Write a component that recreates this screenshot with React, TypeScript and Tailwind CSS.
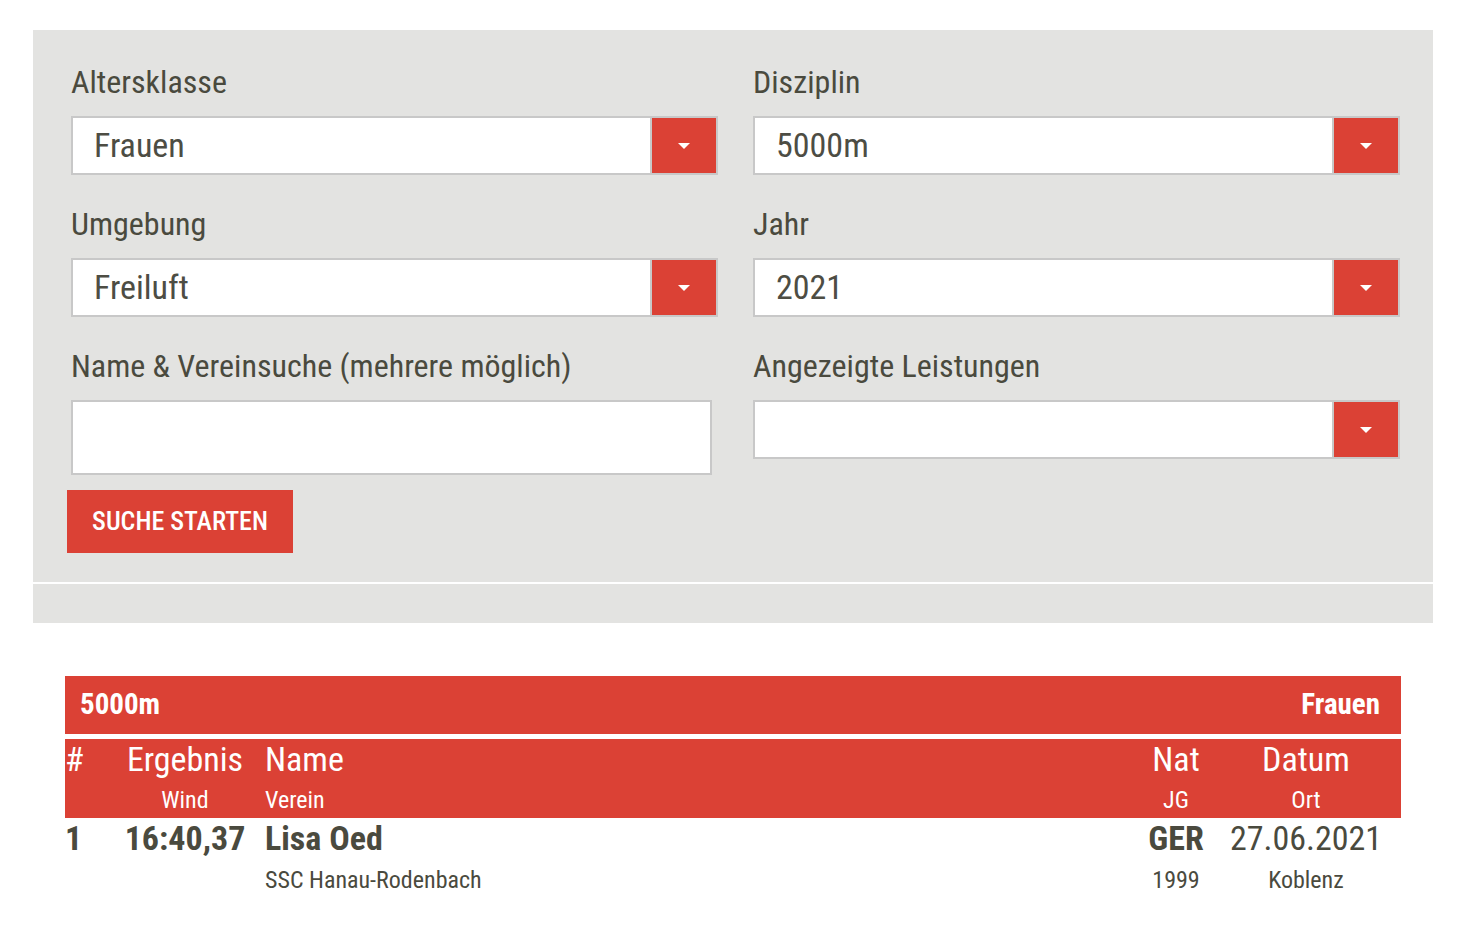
import React from "react";

const FONT = { fontFamily: "Roboto, 'Liberation Sans', sans-serif", fontStretch: "condensed" } as React.CSSProperties;

function Caret() {
  return (
    <svg width="14" height="8" viewBox="0 0 14 8">
      <polygon points="1,1 13,1 7,7" fill="#fff" />
    </svg>
  );
}

function Select({ value }: { value: string }) {
  return (
    <div className="flex h-[59px] border-2 border-[#c8c8c8] bg-white">
      <div className="flex flex-1 items-center pl-[21px] text-[34px] text-[#4d4d44]">{value}</div>
      <div className="flex w-[66px] items-center justify-center border-l-2 border-[#c8c8c8] bg-[#db4135]">
        <Caret />
      </div>
    </div>
  );
}

function Label({ children }: { children: React.ReactNode }) {
  return <div className="mb-[16px] flex h-[36px] items-center text-[32px] leading-none text-[#4a4a3e]">{children}</div>;
}

export default function App() {
  return (
    <div className="min-h-[932px] w-[1466px] bg-white" style={FONT}>
      <div className="ml-[33px] w-[1400px] pt-[30px]">
        <div className="bg-[#e3e3e1] pl-[38px] pr-[33px] pt-[34px] pb-[29px]">
          <div className="grid grid-cols-[647px_647px] gap-x-[35px] gap-y-[31px]">
            <div>
              <Label>Altersklasse</Label>
              <Select value="Frauen" />
            </div>
            <div>
              <Label>Disziplin</Label>
              <Select value="5000m" />
            </div>
            <div>
              <Label>Umgebung</Label>
              <Select value="Freiluft" />
            </div>
            <div>
              <Label>Jahr</Label>
              <Select value="2021" />
            </div>
            <div>
              <Label>Name &amp; Vereinsuche (mehrere möglich)</Label>
              <div className="h-[75px] w-[641px] border-2 border-[#c8c8c8] bg-white" />
              <button className="ml-[-4px] mt-[15px] flex h-[63px] w-[226px] items-center justify-center bg-[#db4135] text-[26px] font-medium text-white">
                SUCHE STARTEN
              </button>
            </div>
            <div>
              <Label>Angezeigte Leistungen</Label>
              <Select value="" />
            </div>
          </div>
        </div>
        <div className="h-[2px] bg-white" />
        <div className="h-[39px] bg-[#e3e3e1]" />
      </div>

      <div className="ml-[65px] mt-[53px] w-[1336px]">
        <div className="flex h-[58px] items-center justify-between bg-[#db4135] pl-[15px] pr-[21px] text-[29px] font-bold text-white">
          <span>5000m</span>
          <span>Frauen</span>
        </div>
        <div className="mt-[5px] grid h-[79px] grid-cols-[55px_130px_1fr_80px_180px] bg-[#db4135] pr-[5px] text-white">
          <div className="pl-0 pt-[1px] text-[34px] leading-[38px]">#</div>
          <div className="flex flex-col items-center pt-[1px]">
            <span className="text-[34px] leading-[38px]">Ergebnis</span>
            <span className="mt-[9px] text-[24px] leading-[26px]">Wind</span>
          </div>
          <div className="flex flex-col items-start pl-[15px] pt-[1px]">
            <span className="text-[34px] leading-[38px]">Name</span>
            <span className="mt-[9px] text-[24px] leading-[26px]">Verein</span>
          </div>
          <div className="flex flex-col items-center pt-[1px]">
            <span className="text-[34px] leading-[38px]">Nat</span>
            <span className="mt-[9px] text-[24px] leading-[26px]">JG</span>
          </div>
          <div className="flex flex-col items-center pt-[1px]">
            <span className="text-[34px] leading-[38px]">Datum</span>
            <span className="mt-[9px] text-[24px] leading-[26px]">Ort</span>
          </div>
        </div>
        <div className="grid grid-cols-[55px_130px_1fr_80px_180px] pr-[5px] text-[#4a4a3e]">
          <div className="pl-0 pt-[1px] text-[34px] font-bold leading-[38px]">1</div>
          <div className="flex flex-col items-center pt-[1px]">
            <span className="text-[34px] font-bold leading-[38px]">16:40,37</span>
          </div>
          <div className="flex flex-col items-start pl-[15px] pt-[1px]">
            <span className="text-[34px] font-bold leading-[38px]">Lisa Oed</span>
            <span className="mt-[10px] text-[24px] leading-[26px]">SSC Hanau-Rodenbach</span>
          </div>
          <div className="flex flex-col items-center pt-[1px]">
            <span className="text-[34px] font-bold leading-[38px]">GER</span>
            <span className="mt-[10px] text-[24px] leading-[26px]">1999</span>
          </div>
          <div className="flex flex-col items-center pt-[1px]">
            <span className="text-[34px] leading-[38px]">27.06.2021</span>
            <span className="mt-[10px] text-[24px] leading-[26px]">Koblenz</span>
          </div>
        </div>
      </div>
    </div>
  );
}
